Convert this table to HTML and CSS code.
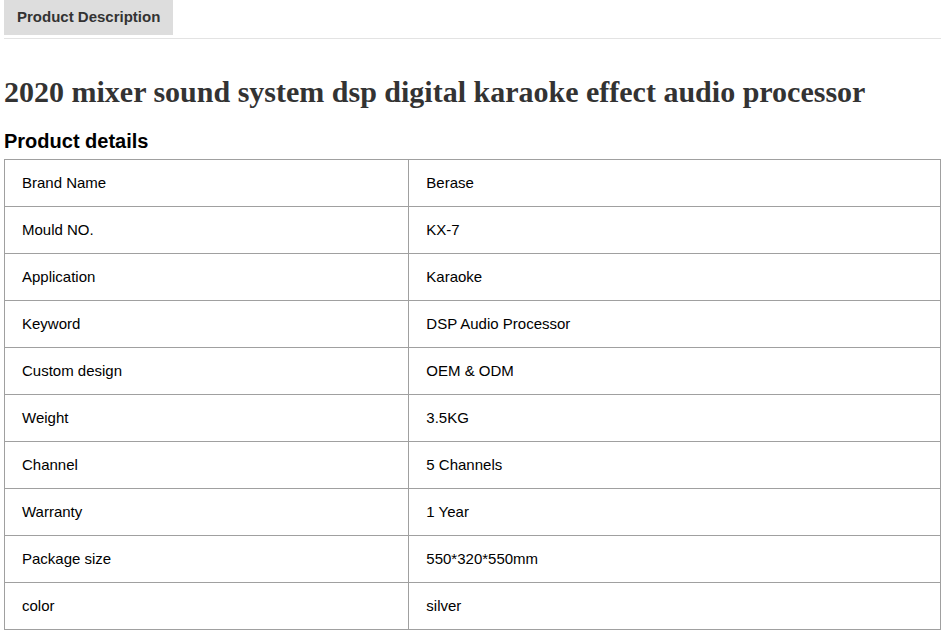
FILE: index.html
```html
<!DOCTYPE html>
<html lang="en">
<head>
    <meta charset="UTF-8">
    <title>Product Description</title>
    <link rel="stylesheet" href="styles.css">
</head>
<body>
    <div class="page">
        <div class="tabs">
            <div class="tab active">Product Description</div>
        </div>

        <div class="description">
            <h1>2020 mixer sound system dsp digital karaoke effect audio processor</h1>
            <h2>Product details</h2>
            <table class="details">
                <tr><td>Brand Name</td><td>Berase</td></tr>
                <tr><td>Mould NO.</td><td>KX-7</td></tr>
                <tr><td>Application</td><td>Karaoke</td></tr>
                <tr><td>Keyword</td><td>DSP Audio Processor</td></tr>
                <tr><td>Custom design</td><td>OEM &amp; ODM</td></tr>
                <tr><td>Weight</td><td>3.5KG</td></tr>
                <tr><td>Channel</td><td>5 Channels</td></tr>
                <tr><td>Warranty</td><td>1 Year</td></tr>
                <tr><td>Package size</td><td>550*320*550mm</td></tr>
                <tr><td>color</td><td>silver</td></tr>
            </table>
        </div>
    </div>
</body>
</html>
```

FILE: styles.css
```css
* {
    box-sizing: border-box;
    margin: 0;
    padding: 0;
}

body {
    font-family: 'Liberation Sans', Arial, sans-serif;
    font-size: 15px;
    color: #000;
    background: #fff;
}

.page {
    padding: 0 1px 0 4px;
}

.tabs {
    display: flex;
    border-bottom: 1px solid #e3e3e3;
    padding-bottom: 3px;
}

.tab {
    background-color: #dddddd;
    color: #333;
    font-weight: bold;
    font-size: 15px;
    line-height: 34px;
    padding: 0 13px 1px;
}

.description h1 {
    font-family: 'Liberation Serif', 'Times New Roman', serif;
    font-size: 30px;
    font-weight: bold;
    color: #333;
    line-height: 36px;
    margin-top: 35px;
}

.description h2 {
    font-size: 20px;
    font-weight: bold;
    color: #000;
    line-height: 24px;
    margin-top: 19px;
}

.details {
    width: 100%;
    border-collapse: collapse;
    margin-top: 6px;
}

.details td {
    border: 1px solid #a0a0a0;
    height: 47px;
    padding: 0 17px 2px;
    vertical-align: middle;
    width: 43.2%;
}

.details td + td {
    width: auto;
}
```
